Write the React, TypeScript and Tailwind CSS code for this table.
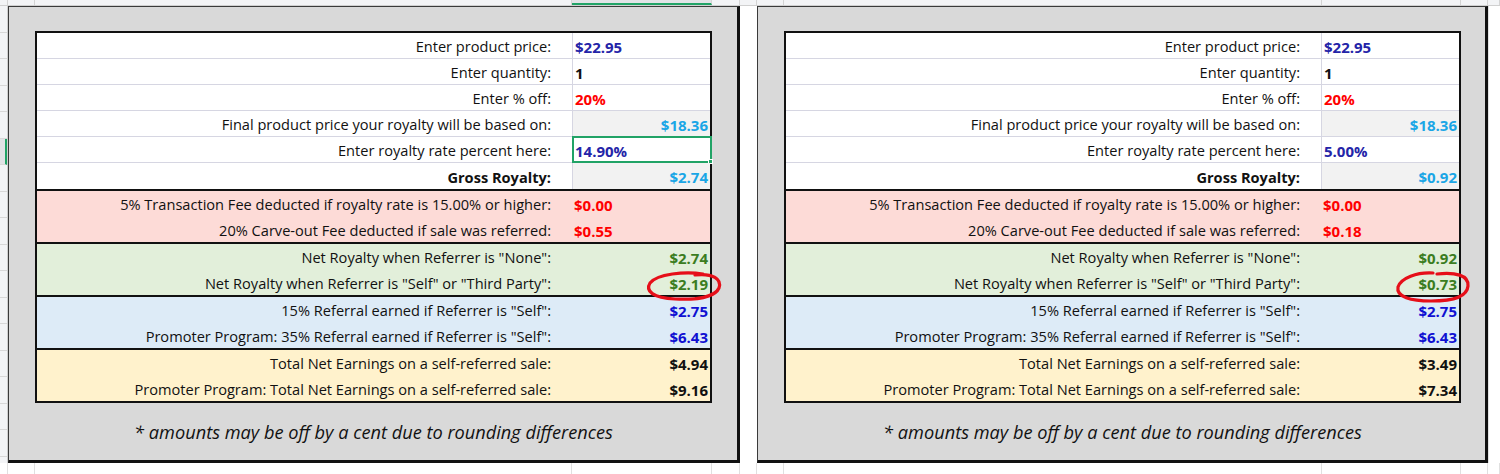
import React from 'react';

type Row = {
  label: string;
  value: string;
  labelBold?: boolean;
  color: string;
  right?: boolean;
  shaded?: boolean;
};

type PanelProps = {
  width: string;
  rows: Row[][];
  selectedRate?: boolean;
  circle: React.ReactNode;
};

// section background colours, in order
const sectionBg = ['bg-white', 'bg-[#fddbd7]', 'bg-[#e2efda]', 'bg-[#ddebf7]', 'bg-[#fff2cc]'];

const makeRows = (v: {
  rate: string;
  gross: string;
  fee: string;
  carve: string;
  none: string;
  self: string;
  total: string;
  ptotal: string;
}): Row[][] => [
  [
    { label: 'Enter product price:', value: '$22.95', color: 'text-[#2424a8]' },
    { label: 'Enter quantity:', value: '1', color: 'text-[#111]' },
    { label: 'Enter % off:', value: '20%', color: 'text-[#ff0000]' },
    { label: 'Final product price your royalty will be based on:', value: '$18.36', color: 'text-[#1aa6e6]', right: true, shaded: true },
    { label: 'Enter royalty rate percent here:', value: v.rate, color: 'text-[#2424a8]' },
    { label: 'Gross Royalty:', value: v.gross, labelBold: true, color: 'text-[#1aa6e6]', right: true, shaded: true },
  ],
  [
    { label: '5% Transaction Fee deducted if royalty rate is 15.00% or higher:', value: v.fee, color: 'text-[#ff0000]' },
    { label: '20% Carve-out Fee deducted if sale was referred:', value: v.carve, color: 'text-[#ff0000]' },
  ],
  [
    { label: 'Net Royalty when Referrer is "None":', value: v.none, color: 'text-[#3b7d1f]', right: true },
    { label: 'Net Royalty when Referrer is "Self" or "Third Party":', value: v.self, color: 'text-[#3b7d1f]', right: true },
  ],
  [
    { label: '15% Referral earned if Referrer is "Self":', value: '$2.75', color: 'text-[#1010d2]', right: true },
    { label: 'Promoter Program: 35% Referral earned if Referrer is "Self":', value: '$6.43', color: 'text-[#1010d2]', right: true },
  ],
  [
    { label: 'Total Net Earnings on a self-referred sale:', value: v.total, color: 'text-[#111]', right: true },
    { label: 'Promoter Program: Total Net Earnings on a self-referred sale:', value: v.ptotal, color: 'text-[#111]', right: true },
  ],
];

const Panel: React.FC<PanelProps> = ({ width, rows, selectedRate, circle }) => {
  return (
    <div className={`${width} h-[457px] flex flex-col bg-[#d9d9d9] border-l border-t border-l-[#3a3a3a] border-t-[#3a3a3a] border-r-[3px] border-b-[3px] border-r-[#111] border-b-[#111] pt-[24px] pl-[26px]`}>
      <div className="w-[677px] border-2 border-[#111] flex flex-col">
        {rows.map((section, si) => (
          <div key={si} className={`${sectionBg[si]} ${si > 0 ? 'border-t-2 border-[#111]' : ''}`}>
            {section.map((row, ri) => {
              const white = si === 0;
              const isSelf = si === 2 && ri === 1;
              const isRate = si === 0 && ri === 4;
              return (
                <div
                  key={ri}
                  className={`flex ${white ? 'h-[26px]' : 'h-[25.5px]'} ${white && ri < 5 ? 'border-b border-[#d6d6e2]' : ''}`}
                >
                  <div className={`w-[535px] shrink-0 flex items-center justify-end pt-[3px] pr-[21px] text-[14.6px] text-[#111] ${row.labelBold ? 'font-bold' : ''}`}>
                    {row.label}
                  </div>
                  <div
                    className={`relative flex-1 flex items-center pt-[3px] text-[15px] font-bold ${row.right ? 'justify-end pr-[2px]' : 'pl-[2px]'} ${row.color} ${white ? 'border-l border-[#d6d6e2]' : ''} ${row.shaded ? 'bg-[#f2f2f2]' : ''}`}
                  >
                    {row.value}
                    {isRate && selectedRate && (
                      <div className="absolute -left-[1px] -top-[1px] -right-[2px] -bottom-[1px] border-2 border-[#21a366]">
                        <div className="absolute -right-[3px] -bottom-[3px] w-[5px] h-[5px] bg-[#21a366] border border-white" />
                      </div>
                    )}
                    {isSelf && circle}
                  </div>
                </div>
              );
            })}
          </div>
        ))}
      </div>
      <div className="w-[677px] flex-1 flex items-center justify-center pt-[3px] italic text-[18.2px] text-[#111]">
        * amounts may be off by a cent due to rounding differences
      </div>
    </div>
  );
};

const LeftCircle = (
  <svg className="absolute left-[73px] top-[1px] overflow-visible" width="76" height="30" viewBox="0 0 76 30" fill="none">
    <path
      d="M58 3 C40 0 12 3 5 12 C0 20 8 27 30 28 C52 29 70 26 74 17 C77 8 68 2 50 4"
      stroke="#e60f19"
      strokeWidth="3.2"
      strokeLinecap="round"
    />
  </svg>
);

const RightCircle = (
  <svg className="absolute left-[74px] top-[0px] overflow-visible" width="76" height="33" viewBox="0 0 76 33" fill="none">
    <path
      d="M38 3 C22 2 6 8 3 17 C1 27 16 31 36 31 C56 31 72 28 73 16 C74 5 60 2 42 4"
      stroke="#e60f19"
      strokeWidth="3.2"
      strokeLinecap="round"
    />
  </svg>
);

// spreadsheet column boundaries seen around the panels
const cols = [8, 27, 537, 140, 28, 17, 27, 538, 139, 27, 12];

const App: React.FC = () => {
  const leftRows = makeRows({
    rate: '14.90%',
    gross: '$2.74',
    fee: '$0.00',
    carve: '$0.55',
    none: '$2.74',
    self: '$2.19',
    total: '$4.94',
    ptotal: '$9.16',
  });
  const rightRows = makeRows({
    rate: '5.00%',
    gross: '$0.92',
    fee: '$0.00',
    carve: '$0.18',
    none: '$0.92',
    self: '$0.73',
    total: '$3.49',
    ptotal: '$7.34',
  });

  return (
    <div className="w-[1500px] h-[474px] overflow-hidden bg-white flex flex-col font-['Open_Sans',sans-serif] text-[14px]">
      {/* column header strip */}
      <div className="h-[6px] flex bg-[#f3f4f6] border-b border-[#d0d0d0]">
        {cols.map((w, i) => (
          <div
            key={i}
            style={{ width: w }}
            className={`shrink-0 border-r border-[#d4d4d4] ${i === 3 ? 'border-b-2 border-b-[#21a366] bg-[#e1e3e6]' : ''}`}
          />
        ))}
      </div>

      <div className="flex h-[457px]">
        {/* row header strip */}
        <div className="w-[8px] shrink-0 flex flex-col bg-[#f3f4f6] border-r border-[#cfcfcf]">
          {Array.from({ length: 18 }).map((_, i) => (
            <div
              key={i}
              className={`h-[26.5px] shrink-0 border-b border-[#d8d8d8] ${i === 5 ? 'border-r-2 border-r-[#21a366] bg-[#e1e3e6]' : ''}`}
            />
          ))}
        </div>
        <Panel width="w-[732px]" rows={leftRows} selectedRate circle={LeftCircle} />
        <div className="w-[17px] shrink-0 bg-white" />
        <Panel width="w-[731px]" rows={rightRows} circle={RightCircle} />
        <div className="flex-1 bg-white border-l border-[#e2e2e2]" />
      </div>

      {/* gridlines under the panels */}
      <div className="flex-1 flex">
        {cols.map((w, i) => (
          <div key={i} style={{ width: w }} className="shrink-0 border-r border-[#e0e0e0]" />
        ))}
      </div>
    </div>
  );
};

export default App;
